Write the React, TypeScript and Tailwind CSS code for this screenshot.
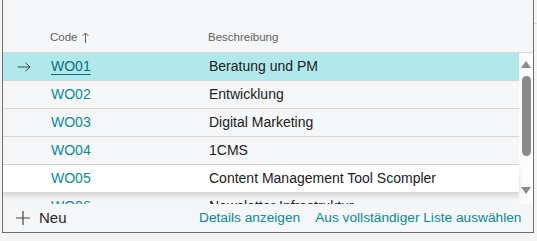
const rows = [
  { code: "WO01", text: "Beratung und PM" },
  { code: "WO02", text: "Entwicklung" },
  { code: "WO03", text: "Digital Marketing" },
  { code: "WO04", text: "1CMS" },
  { code: "WO05", text: "Content Management Tool Scompler" },
  { code: "WO06", text: "Newsletter Infrastruktur" },
];

function Scrollbar() {
  return (
    <div className="flex w-[14px] shrink-0 flex-col items-center bg-[#fcfcfc] pt-[8px]">
      <svg width="10" height="7" viewBox="0 0 10 7">
        <path d="M5 0 L10 7 L0 7 Z" fill="#8a8a8a" />
      </svg>
      <div className="mt-[8px] h-[80px] w-[9px] rounded-full bg-[#8a8a8a]" />
      <svg width="10" height="7" viewBox="0 0 10 7" className="mt-[31px]">
        <path d="M0 0 L10 0 L5 7 Z" fill="#8a8a8a" />
      </svg>
    </div>
  );
}

export default function App() {
  return (
    <div
      className="flex h-[241px] w-[537px] overflow-hidden bg-[#f3f3f3] text-[14px] text-[#212121]"
      style={{ fontFamily: '"Liberation Sans", Arial, sans-serif' }}
    >
      <div className="w-[2px] shrink-0" />
      <div className="flex h-[233px] w-[532px] shrink-0 flex-col border-x border-b border-[#6e6e6e] bg-[#f5f6f8]">
        <div className="flex h-[53px] shrink-0 items-end border-b border-[#d6d6d6] pb-[6px] text-[11.5px] text-[#5f5f5f]">
          <div className="w-[47px] shrink-0" />
          <div className="flex w-[158px] shrink-0 items-center gap-[4px]">
            Code
            <svg width="7" height="11" viewBox="0 0 7 11">
              <path d="M3.5 1 V11 M0.5 4 L3.5 1 L6.5 4" stroke="#5f5f5f" strokeWidth="1" fill="none" />
            </svg>
          </div>
          <div>Beschreibung</div>
        </div>

        <div className="flex h-[151px] shrink-0 overflow-hidden">
          <div className="min-w-0 flex-1">
            {rows.map((row, i) => (
              <div
                key={row.code}
                className={
                  "flex h-[28px] items-center border-b border-[#d6d6d6] " +
                  (i === 0
                    ? "bg-[#b1e8eb]"
                    : i === 4
                      ? "relative bg-white shadow-[0_3px_5px_rgba(0,0,0,0.14)]"
                      : "")
                }
              >
                <div className="flex w-[48px] shrink-0 pl-[14px]">
                  {i === 0 && (
                    <svg width="14" height="10" viewBox="0 0 14 10">
                      <path d="M0.5 5 H13 M8.5 0.8 L13 5 L8.5 9.2" stroke="#444" strokeWidth="1" fill="none" />
                    </svg>
                  )}
                </div>
                <div
                  className={
                    "w-[158px] shrink-0 " +
                    (i === 0
                      ? "text-[#0b6e79] underline underline-offset-[3px]"
                      : "text-[#0a8a96]")
                  }
                >
                  {row.code}
                </div>
                <div className="truncate">{row.text}</div>
              </div>
            ))}
          </div>
          <Scrollbar />
        </div>

        <div className="flex flex-1 items-center text-[13.7px] text-[#0a8a96]">
          <div className="flex w-[196px] shrink-0 items-center gap-[9px] pl-[13px] text-[15px] text-[#262626]">
            <svg width="14" height="14" viewBox="0 0 14 14">
              <path d="M7 0 V14 M0 7 H14" stroke="#444" strokeWidth="1.2" fill="none" />
            </svg>
            Neu
          </div>
          <div className="mr-[15px]">Details anzeigen</div>
          <div>Aus vollständiger Liste auswählen</div>
        </div>
      </div>
      <div className="flex-1 pt-[23px]">
        <div className="border-t border-[#dcdcdc]" />
      </div>
    </div>
  );
}
